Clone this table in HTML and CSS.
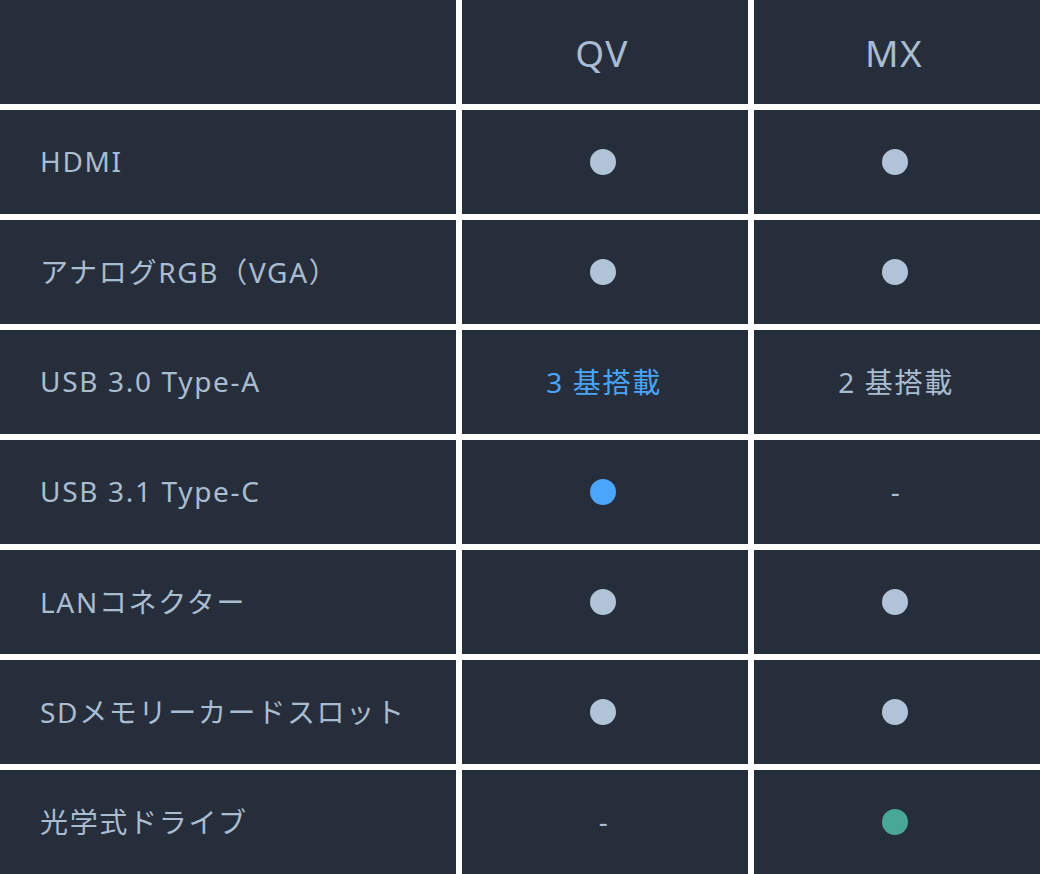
FILE: index.html
```html
<!DOCTYPE html>
<html lang="ja">
<head>
<meta charset="utf-8">
<title>比較表</title>
<link rel="stylesheet" href="styles.css">
</head>
<body>
<div class="table">
  <div class="cell head"></div>
  <div class="cell head center">QV</div>
  <div class="cell head center">MX</div>

  <div class="cell label">HDMI</div>
  <div class="cell center"><span class="dot"></span></div>
  <div class="cell center"><span class="dot"></span></div>

  <div class="cell label">アナログRGB（VGA）</div>
  <div class="cell center"><span class="dot"></span></div>
  <div class="cell center"><span class="dot"></span></div>

  <div class="cell label">USB 3.0 Type-A</div>
  <div class="cell center val blue">3 基搭載</div>
  <div class="cell center val">2 基搭載</div>

  <div class="cell label">USB 3.1 Type-C</div>
  <div class="cell center"><span class="dot blue-dot"></span></div>
  <div class="cell center val">-</div>

  <div class="cell label">LANコネクター</div>
  <div class="cell center"><span class="dot"></span></div>
  <div class="cell center"><span class="dot"></span></div>

  <div class="cell label">SDメモリーカードスロット</div>
  <div class="cell center"><span class="dot"></span></div>
  <div class="cell center"><span class="dot"></span></div>

  <div class="cell label">光学式ドライブ</div>
  <div class="cell center val">-</div>
  <div class="cell center"><span class="dot green-dot"></span></div>
</div>
</body>
</html>
```

FILE: styles.css
```css
html, body {
  margin: 0;
  padding: 0;
  background: #ffffff;
}

body {
  font-family: "Noto Sans", "Noto Sans CJK JP", sans-serif;
  color: #a9bcd0;
}

.table {
  display: grid;
  grid-template-columns: 456px 286px 286px;
  grid-auto-rows: 104px;
  gap: 6px;
  background: #ffffff;
  width: 1040px;
}

.cell {
  background: #272e3b;
  display: flex;
  align-items: center;
  font-size: 28px;
  letter-spacing: 0.06em;
}

.head {
  font-size: 37px;
  letter-spacing: 0.04em;
  padding-right: 6px;
}

.label {
  padding-left: 40px;
  padding-bottom: 2px;
}

.center {
  justify-content: center;
}

.val {
  padding-right: 2px;
  padding-bottom: 2px;
}

.blue {
  color: #4aa5f8;
}

.dot {
  display: block;
  width: 26px;
  height: 26px;
  border-radius: 50%;
  background: #b0c3d7;
  margin-right: 5px;
}

.blue-dot {
  background: #4aa5fb;
}

.green-dot {
  background: #47a896;
}
```
